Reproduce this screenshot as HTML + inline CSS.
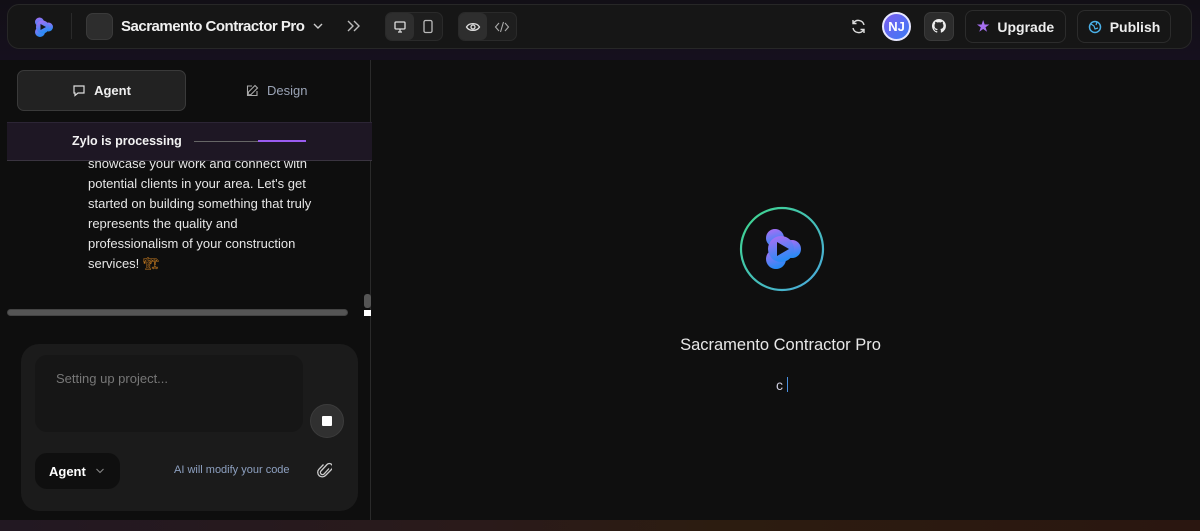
<!DOCTYPE html>
<html><head><meta charset="utf-8"><style>
*{box-sizing:border-box;margin:0;padding:0}
body{width:1200px;height:531px;overflow:hidden;background:#0f0f0f;font-family:"Liberation Sans",sans-serif;color:#eee;position:relative}
.top{position:absolute;left:0;top:0;width:1200px;height:60px;background:linear-gradient(#120f16,#16101e)}
.hdr{position:absolute;left:7px;top:4px;width:1185px;height:45px;background:#161616;border:1px solid #272727;border-radius:12px}
.abs{position:absolute}
.btn{position:absolute;border:1px solid #2c2c2c;border-radius:8px;background:#161616;font-size:14px;font-weight:bold;color:#eee;display:flex;align-items:center;justify-content:center;gap:8px}
.left{position:absolute;left:0;top:60px;width:371px;height:460px;border-right:1px solid #2a2a2a;background:#0e0e0e}
.msg{position:absolute;left:88px;top:154px;width:238px;font-size:13px;line-height:20px;color:#e6e6e6}
.bottom{position:absolute;left:0;top:520px;width:1200px;height:11px;background:linear-gradient(90deg,#221822,#2a1a1a 40%,#2c1c10 60%,#2a1610)}
</style></head><body>
<div class="top"></div>
<div class="hdr"></div>
<svg class="abs" style="left:32px;top:16px" width="22" height="22" viewBox="0 0 22 22"><defs><linearGradient id="g" x1="0" y1="0" x2="0.3" y2="1"><stop offset="0" stop-color="#b06cf5"/><stop offset="1" stop-color="#2a8cf5"/></linearGradient></defs><circle cx="7.5" cy="6" r="4.5" fill="url(#g)"/><circle cx="16.5" cy="11" r="4.5" fill="url(#g)"/><circle cx="8" cy="16" r="5" fill="url(#g)"/><circle cx="10.5" cy="11" r="6.5" fill="url(#g)"/><path d="M8.5 8 L14 11 L8.5 14Z" fill="#161616"/></svg>
<div class="abs" style="left:71px;top:13px;width:1px;height:26px;background:#2a2a2a"></div>
<div class="abs" style="left:86px;top:13px;width:27px;height:27px;border-radius:7px;background:#2d2d2d;border:1px solid #3a3a3a"></div>
<div class="abs" style="left:121px;top:18px;font-size:15px;font-weight:bold;color:#f0f0f0;letter-spacing:-0.5px">Sacramento Contractor Pro</div>
<svg class="abs" style="left:312px;top:21px" width="12" height="10"><path d="M2 3l4 4 4-4" stroke="#ccc" stroke-width="1.4" fill="none"/></svg>
<svg class="abs" style="left:346px;top:19px" width="16" height="14"><path d="M2 2l5 5-5 5M8 2l5 5-5 5" stroke="#bbb" stroke-width="1.4" fill="none"/></svg>
<div class="abs" style="left:385px;top:12px;width:58px;height:29px;border-radius:7px;background:#1e1e1e;border:1px solid #2a2a2a"></div>
<div class="abs" style="left:386px;top:13px;width:28px;height:27px;border-radius:6px;background:#2e2e2e"></div>
<svg class="abs" style="left:393px;top:20px" width="14" height="14"><rect x="2" y="2" width="10" height="7" rx="1" stroke="#ddd" stroke-width="1.3" fill="none"/><path d="M5 12h4M7 9v3" stroke="#ddd" stroke-width="1.3"/></svg>
<svg class="abs" style="left:422px;top:19px" width="12" height="15"><rect x="2" y="1.5" width="8" height="12" rx="1.5" stroke="#bbb" stroke-width="1.3" fill="none"/></svg>
<div class="abs" style="left:458px;top:12px;width:59px;height:29px;border-radius:7px;background:#1e1e1e;border:1px solid #2a2a2a"></div>
<div class="abs" style="left:459px;top:13px;width:28px;height:27px;border-radius:6px;background:#2e2e2e"></div>
<svg class="abs" style="left:465px;top:20px" width="16" height="14"><path d="M1.5 7C4 2.5 12 2.5 14.5 7 12 11.5 4 11.5 1.5 7Z" stroke="#ddd" stroke-width="1.3" fill="none"/><circle cx="8" cy="7" r="2" stroke="#ddd" stroke-width="1.3" fill="none"/></svg>
<svg class="abs" style="left:494px;top:20px" width="16" height="14"><path d="M5 3L1.5 7 5 11M11 3l3.5 4-3.5 4M9.5 2L6.5 12" stroke="#aaa" stroke-width="1.1" fill="none"/></svg>
<svg class="abs" style="left:850px;top:18px" width="17" height="17" viewBox="0 0 17 17"><path d="M14 7A5.8 5.8 0 0 0 3.5 5M3 10a5.8 5.8 0 0 0 10.5 2M3 2v3.5h3.5M14 15v-3.5h-3.5" stroke="#ddd" stroke-width="1.4" fill="none"/></svg>
<div class="abs" style="left:882px;top:12px;width:29px;height:29px;border-radius:50%;background:linear-gradient(135deg,#7b5cf0,#3b7bf5);border:2px solid #e8e8ff;font-size:13px;font-weight:bold;color:#fff;text-align:center;line-height:25px">NJ</div>
<div class="abs" style="left:924px;top:12px;width:30px;height:29px;border-radius:7px;background:#2c2c2c;border:1px solid #3a3a3a"></div>
<svg class="abs" style="left:932px;top:19px" width="14" height="14" viewBox="0 0 16 16"><path fill="#eee" d="M8 0a8 8 0 0 0-2.5 15.6c.4 0 .5-.2.5-.4v-1.5c-2.2.5-2.7-1-2.7-1-.4-.9-.9-1.2-.9-1.2-.7-.5.1-.5.1-.5.8.1 1.2.8 1.2.8.7 1.3 1.9.9 2.3.7.1-.5.3-.9.5-1.1-1.8-.2-3.6-.9-3.6-4 0-.9.3-1.6.8-2.1-.1-.2-.4-1 .1-2.1 0 0 .7-.2 2.2.8a7.4 7.4 0 0 1 4 0c1.5-1 2.2-.8 2.2-.8.4 1.1.2 1.9.1 2.1.5.6.8 1.3.8 2.1 0 3.1-1.9 3.8-3.6 4 .3.3.6.8.6 1.5v2.2c0 .2.1.5.6.4A8 8 0 0 0 8 0z"/></svg>
<div class="btn" style="left:965px;top:10px;width:101px;height:33px"><span style="color:#a56ef0;font-size:14px">★</span>Upgrade</div>
<div class="btn" style="left:1077px;top:10px;width:94px;height:33px"><svg width="14" height="14"><circle cx="7" cy="7" r="5.5" stroke="#4ab0e8" stroke-width="1.5" fill="none"/><path d="M3 4l3 2 1 3 3-1M9 2l-1 3" stroke="#4ab0e8" stroke-width="1.2" fill="none"/></svg>Publish</div>

<div class="left"></div>
<div class="btn" style="left:17px;top:70px;width:169px;height:41px;background:#222;border-color:#3a3a3a;border-radius:7px;font-size:13px"><svg width="14" height="13"><path d="M2 2h10v7H6l-3 2.5V9H2z" stroke="#ddd" stroke-width="1.2" fill="none"/></svg>Agent</div>
<div class="abs" style="left:246px;top:83px;font-size:13px;color:#9aa3b5;display:flex;gap:8px;align-items:center"><svg width="13" height="13"><path d="M9 1.5l2.5 2.5L5 10.5 2 11l.5-3z M11 7v4.5H1.5V2H6" stroke="#aaa" stroke-width="1.1" fill="none"/></svg>Design</div>
<div class="msg">showcase your work and connect with potential clients in your area. Let's get started on building something that truly represents the quality and professionalism of your construction services! <span style="color:#c47a20">🏗</span></div>
<div class="abs" style="left:7px;top:122px;width:365px;height:39px;background:#1e1724;border-top:1px solid #2c2535;border-bottom:1px solid #3a3440"></div>
<div class="abs" style="left:72px;top:134px;font-size:12.5px;font-weight:bold;color:#f2f2f2">Zylo is processing</div>
<div class="abs" style="left:194px;top:141px;width:64px;height:1px;background:#666"></div>
<div class="abs" style="left:258px;top:140px;width:48px;height:2px;background:#9a5cf0"></div>
<div class="abs" style="left:7px;top:309px;width:341px;height:7px;border-radius:4px;background:#555;border:1px solid #444"></div>
<div class="abs" style="left:364px;top:294px;width:7px;height:14px;border-radius:3px;background:#555"></div>
<div class="abs" style="left:364px;top:310px;width:7px;height:6px;background:#fff"></div>
<div class="abs" style="left:21px;top:344px;width:337px;height:167px;border-radius:18px;background:#1b1b1b"></div>
<div class="abs" style="left:35px;top:355px;width:268px;height:77px;border-radius:12px;background:#161616"></div>
<div class="abs" style="left:56px;top:371px;font-size:13px;color:#777">Setting up project...</div>
<div class="abs" style="left:310px;top:404px;width:34px;height:34px;border-radius:50%;background:#303030;border:1px solid #3c3c3c"></div>
<div class="abs" style="left:322px;top:416px;width:10px;height:10px;background:#fff;border-radius:1px"></div>
<div class="abs" style="left:35px;top:453px;width:85px;height:36px;border-radius:12px;background:#0f0f0f"></div>
<div class="abs" style="left:49px;top:464px;font-size:13px;font-weight:bold;color:#fff">Agent</div>
<svg class="abs" style="left:95px;top:467px" width="10" height="8"><path d="M1.5 2l3.5 3.5L8.5 2" stroke="#888" stroke-width="1.1" fill="none"/></svg>
<div class="abs" style="left:174px;top:464px;font-size:11px;color:#8da0c0">AI will modify your code</div>
<svg class="abs" style="left:317px;top:462px" width="15" height="17" viewBox="0 0 15 17"><path d="M11 6.5L6 12a2 2 0 0 1-3-3l6-6.5a3.3 3.3 0 0 1 4.7 4.7L7.5 13.5a4.5 4.5 0 0 1-6.5-6.3L5.5 2.5" stroke="#ccc" stroke-width="1.3" fill="none" transform="translate(1 0)"/></svg>

<svg class="abs" style="left:739px;top:206px" width="86" height="86" viewBox="0 0 86 86"><defs><linearGradient id="r" x1="0" y1="0" x2="1" y2="1"><stop offset="0" stop-color="#3ed88a"/><stop offset="1" stop-color="#4aa8e0"/></linearGradient><linearGradient id="g2" x1="0" y1="0" x2="0.3" y2="1"><stop offset="0" stop-color="#b46cf5"/><stop offset="1" stop-color="#2a8af5"/></linearGradient></defs><circle cx="43" cy="43" r="41" stroke="url(#r)" stroke-width="2.2" fill="none"/><circle cx="36" cy="32" r="9" fill="url(#g2)"/><circle cx="53" cy="43" r="9" fill="url(#g2)"/><circle cx="37" cy="53" r="10" fill="url(#g2)"/><circle cx="42" cy="43" r="13" fill="url(#g2)"/><path d="M38 36L50 43 38 50Z" fill="#111"/></svg>
<div class="abs" style="left:598px;top:336px;width:365px;text-align:center;font-size:16.5px;color:#e8e8e8">Sacramento Contractor Pro</div>
<div class="abs" style="left:776px;top:377px;font-size:14px;color:#ccd">c<span style="display:inline-block;width:1px;height:15px;background:#4a90e0;margin-left:4px;vertical-align:-2px"></span></div>
<div class="bottom"></div>
</body></html>
